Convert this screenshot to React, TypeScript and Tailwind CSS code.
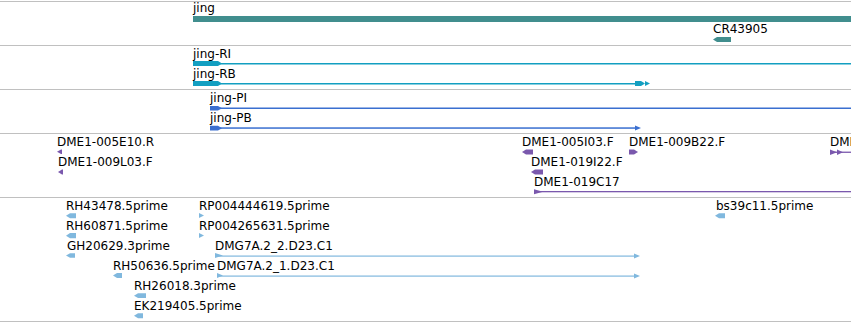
import React from 'react';

type Label = { x: number; base: number; text: string };

interface TrackProps {
  y0: number;
  height: number;
  labels: Label[];
  children?: React.ReactNode;
}

// Left-pointing feature block (reverse strand)
function LeftBlock({ x1, x2, y1, y2, fill }: { x1: number; x2: number; y1: number; y2: number; fill: string }) {
  const m = (y1 + y2) / 2;
  const t = Math.min(4, x2 - x1);
  return <polygon points={`${x1},${m} ${x1 + t},${y1} ${x2},${y1} ${x2},${y2} ${x1 + t},${y2}`} fill={fill} />;
}

// Right-pointing feature block (forward strand)
function RightBlock({ x1, x2, y1, y2, fill }: { x1: number; x2: number; y1: number; y2: number; fill: string }) {
  const m = (y1 + y2) / 2;
  const t = Math.min(4, x2 - x1);
  return <polygon points={`${x1},${y1} ${x2 - t},${y1} ${x2},${m} ${x2 - t},${y2} ${x1},${y2}`} fill={fill} />;
}

function Tri({ x1, x2, y1, y2, fill }: { x1: number; x2: number; y1: number; y2: number; fill: string }) {
  return <polygon points={`${x1},${y1} ${x2},${(y1 + y2) / 2} ${x1},${y2}`} fill={fill} />;
}

function Track({ y0, height, labels, children }: TrackProps) {
  return (
    <div className="relative w-full border-b border-[#c0c0c0]" style={{ height }}>
      <svg
        className="absolute left-0 top-0"
        width={851}
        height={height - 1}
        viewBox={`0 ${y0} 851 ${height - 1}`}
      >
        {children}
      </svg>
      {labels.map((l, i) => (
        <div
          key={i}
          className="absolute whitespace-nowrap text-[12px] leading-[14px] text-black"
          style={{ left: l.x, top: l.base - 11 - y0 }}
        >
          {l.text}
        </div>
      ))}
    </div>
  );
}

const TEAL = '#418e8e';
const CYAN = '#139fc1';
const BLUE = '#3a6fd0';
const PURPLE = '#7a58ad';
const SKY = '#80b8de';

export default function App() {
  return (
    <div
      className="w-[851px] h-[322px] overflow-hidden bg-white"
      style={{ fontFamily: '"DejaVu Sans", sans-serif' }}
    >
      <div className="h-[2px] border-b border-[#c0c0c0]" />

      {/* Gene track */}
      <Track
        y0={2}
        height={44}
        labels={[
          { x: 193, base: 12, text: 'jing' },
          { x: 713, base: 33, text: 'CR43905' },
        ]}
      >
        <rect x={193} y={16} width={658} height={6} fill={TEAL} />
        <LeftBlock x1={713} x2={731} y1={37} y2={42} fill={TEAL} />
      </Track>

      {/* Transcripts */}
      <Track
        y0={46}
        height={44}
        labels={[
          { x: 193, base: 57.5, text: 'jing-RI' },
          { x: 193, base: 77.5, text: 'jing-RB' },
        ]}
      >
        <rect x={193} y={63} width={658} height={1.5} fill={CYAN} />
        <RightBlock x1={193} x2={222} y1={61} y2={66} fill={CYAN} />
        <rect x={193} y={83} width={444} height={1.5} fill={CYAN} />
        <RightBlock x1={193} x2={222} y1={81} y2={86} fill={CYAN} />
        <RightBlock x1={635} x2={645} y1={81} y2={86} fill={CYAN} />
        <Tri x1={645} x2={650} y1={81} y2={86} fill={CYAN} />
      </Track>

      {/* Polypeptides */}
      <Track
        y0={90}
        height={44}
        labels={[
          { x: 210, base: 102, text: 'jing-PI' },
          { x: 210, base: 122, text: 'jing-PB' },
        ]}
      >
        <rect x={210} y={107.5} width={641} height={1.5} fill={BLUE} />
        <RightBlock x1={210} x2={222} y1={106} y2={110.5} fill={BLUE} />
        <rect x={210} y={127.3} width={426} height={1.5} fill={BLUE} />
        <RightBlock x1={210} x2={222} y1={125.8} y2={130.5} fill={BLUE} />
        <Tri x1={635} x2={641} y1={125.5} y2={130.5} fill={BLUE} />
      </Track>

      {/* BAC ends */}
      <Track
        y0={134}
        height={64}
        labels={[
          { x: 57, base: 146, text: 'DME1-005E10.R' },
          { x: 58, base: 166, text: 'DME1-009L03.F' },
          { x: 522, base: 146, text: 'DME1-005I03.F' },
          { x: 629, base: 146, text: 'DME1-009B22.F' },
          { x: 830, base: 146, text: 'DME1-019C17' },
          { x: 531, base: 166, text: 'DME1-019I22.F' },
          { x: 534, base: 186, text: 'DME1-019C17' },
        ]}
      >
        <LeftBlock x1={57} x2={62} y1={149.5} y2={154} fill={PURPLE} />
        <LeftBlock x1={58} x2={63} y1={169.5} y2={174.5} fill={PURPLE} />
        <LeftBlock x1={522} x2={533} y1={149.5} y2={154.5} fill={PURPLE} />
        <RightBlock x1={629} x2={638} y1={149.5} y2={154.5} fill={PURPLE} />
        <rect x={830} y={151.6} width={21} height={1.3} fill={PURPLE} />
        <Tri x1={830} x2={837} y1={149.5} y2={155} fill={PURPLE} />
        <Tri x1={837} x2={843} y1={149.5} y2={155} fill={PURPLE} />
        <LeftBlock x1={531} x2={543} y1={169.5} y2={174.5} fill={PURPLE} />
        <rect x={534} y={191} width={317} height={1.3} fill={PURPLE} />
        <Tri x1={534} x2={543} y1={189.3} y2={194.3} fill={PURPLE} />
      </Track>

      {/* cDNA / EST alignments */}
      <Track
        y0={198}
        height={124}
        labels={[
          { x: 66, base: 210, text: 'RH43478.5prime' },
          { x: 66, base: 230, text: 'RH60871.5prime' },
          { x: 67, base: 250, text: 'GH20629.3prime' },
          { x: 113, base: 270, text: 'RH50636.5prime' },
          { x: 134, base: 290, text: 'RH26018.3prime' },
          { x: 134, base: 310, text: 'EK219405.5prime' },
          { x: 199, base: 210, text: 'RP004444619.5prime' },
          { x: 199, base: 230, text: 'RP004265631.5prime' },
          { x: 215, base: 250, text: 'DMG7A.2_2.D23.C1' },
          { x: 217, base: 270, text: 'DMG7A.2_1.D23.C1' },
          { x: 716, base: 210, text: 'bs39c11.5prime' },
        ]}
      >
        <LeftBlock x1={66} x2={76} y1={213.3} y2={218.3} fill={SKY} />
        <LeftBlock x1={66} x2={76} y1={233} y2={238.3} fill={SKY} />
        <LeftBlock x1={66} x2={75} y1={253.3} y2={257.7} fill={SKY} />
        <LeftBlock x1={113} x2={122} y1={273} y2={278} fill={SKY} />
        <LeftBlock x1={134} x2={146} y1={293.3} y2={298} fill={SKY} />
        <LeftBlock x1={134} x2={143} y1={313.3} y2={318.3} fill={SKY} />
        <Tri x1={199} x2={204} y1={213} y2={218} fill={SKY} />
        <Tri x1={199} x2={204} y1={233} y2={238} fill={SKY} />
        <rect x={215} y={255.5} width={420} height={1.2} fill={SKY} />
        <Tri x1={215} x2={223} y1={253} y2={258} fill={SKY} />
        <Tri x1={634} x2={640} y1={253.5} y2={258.5} fill={SKY} />
        <rect x={217} y={275.5} width={418} height={1.2} fill={SKY} />
        <Tri x1={217} x2={223} y1={273} y2={278} fill={SKY} />
        <Tri x1={634} x2={640} y1={273.5} y2={278.5} fill={SKY} />
        <LeftBlock x1={715} x2={725} y1={213.3} y2={218.3} fill={SKY} />
      </Track>
    </div>
  );
}
